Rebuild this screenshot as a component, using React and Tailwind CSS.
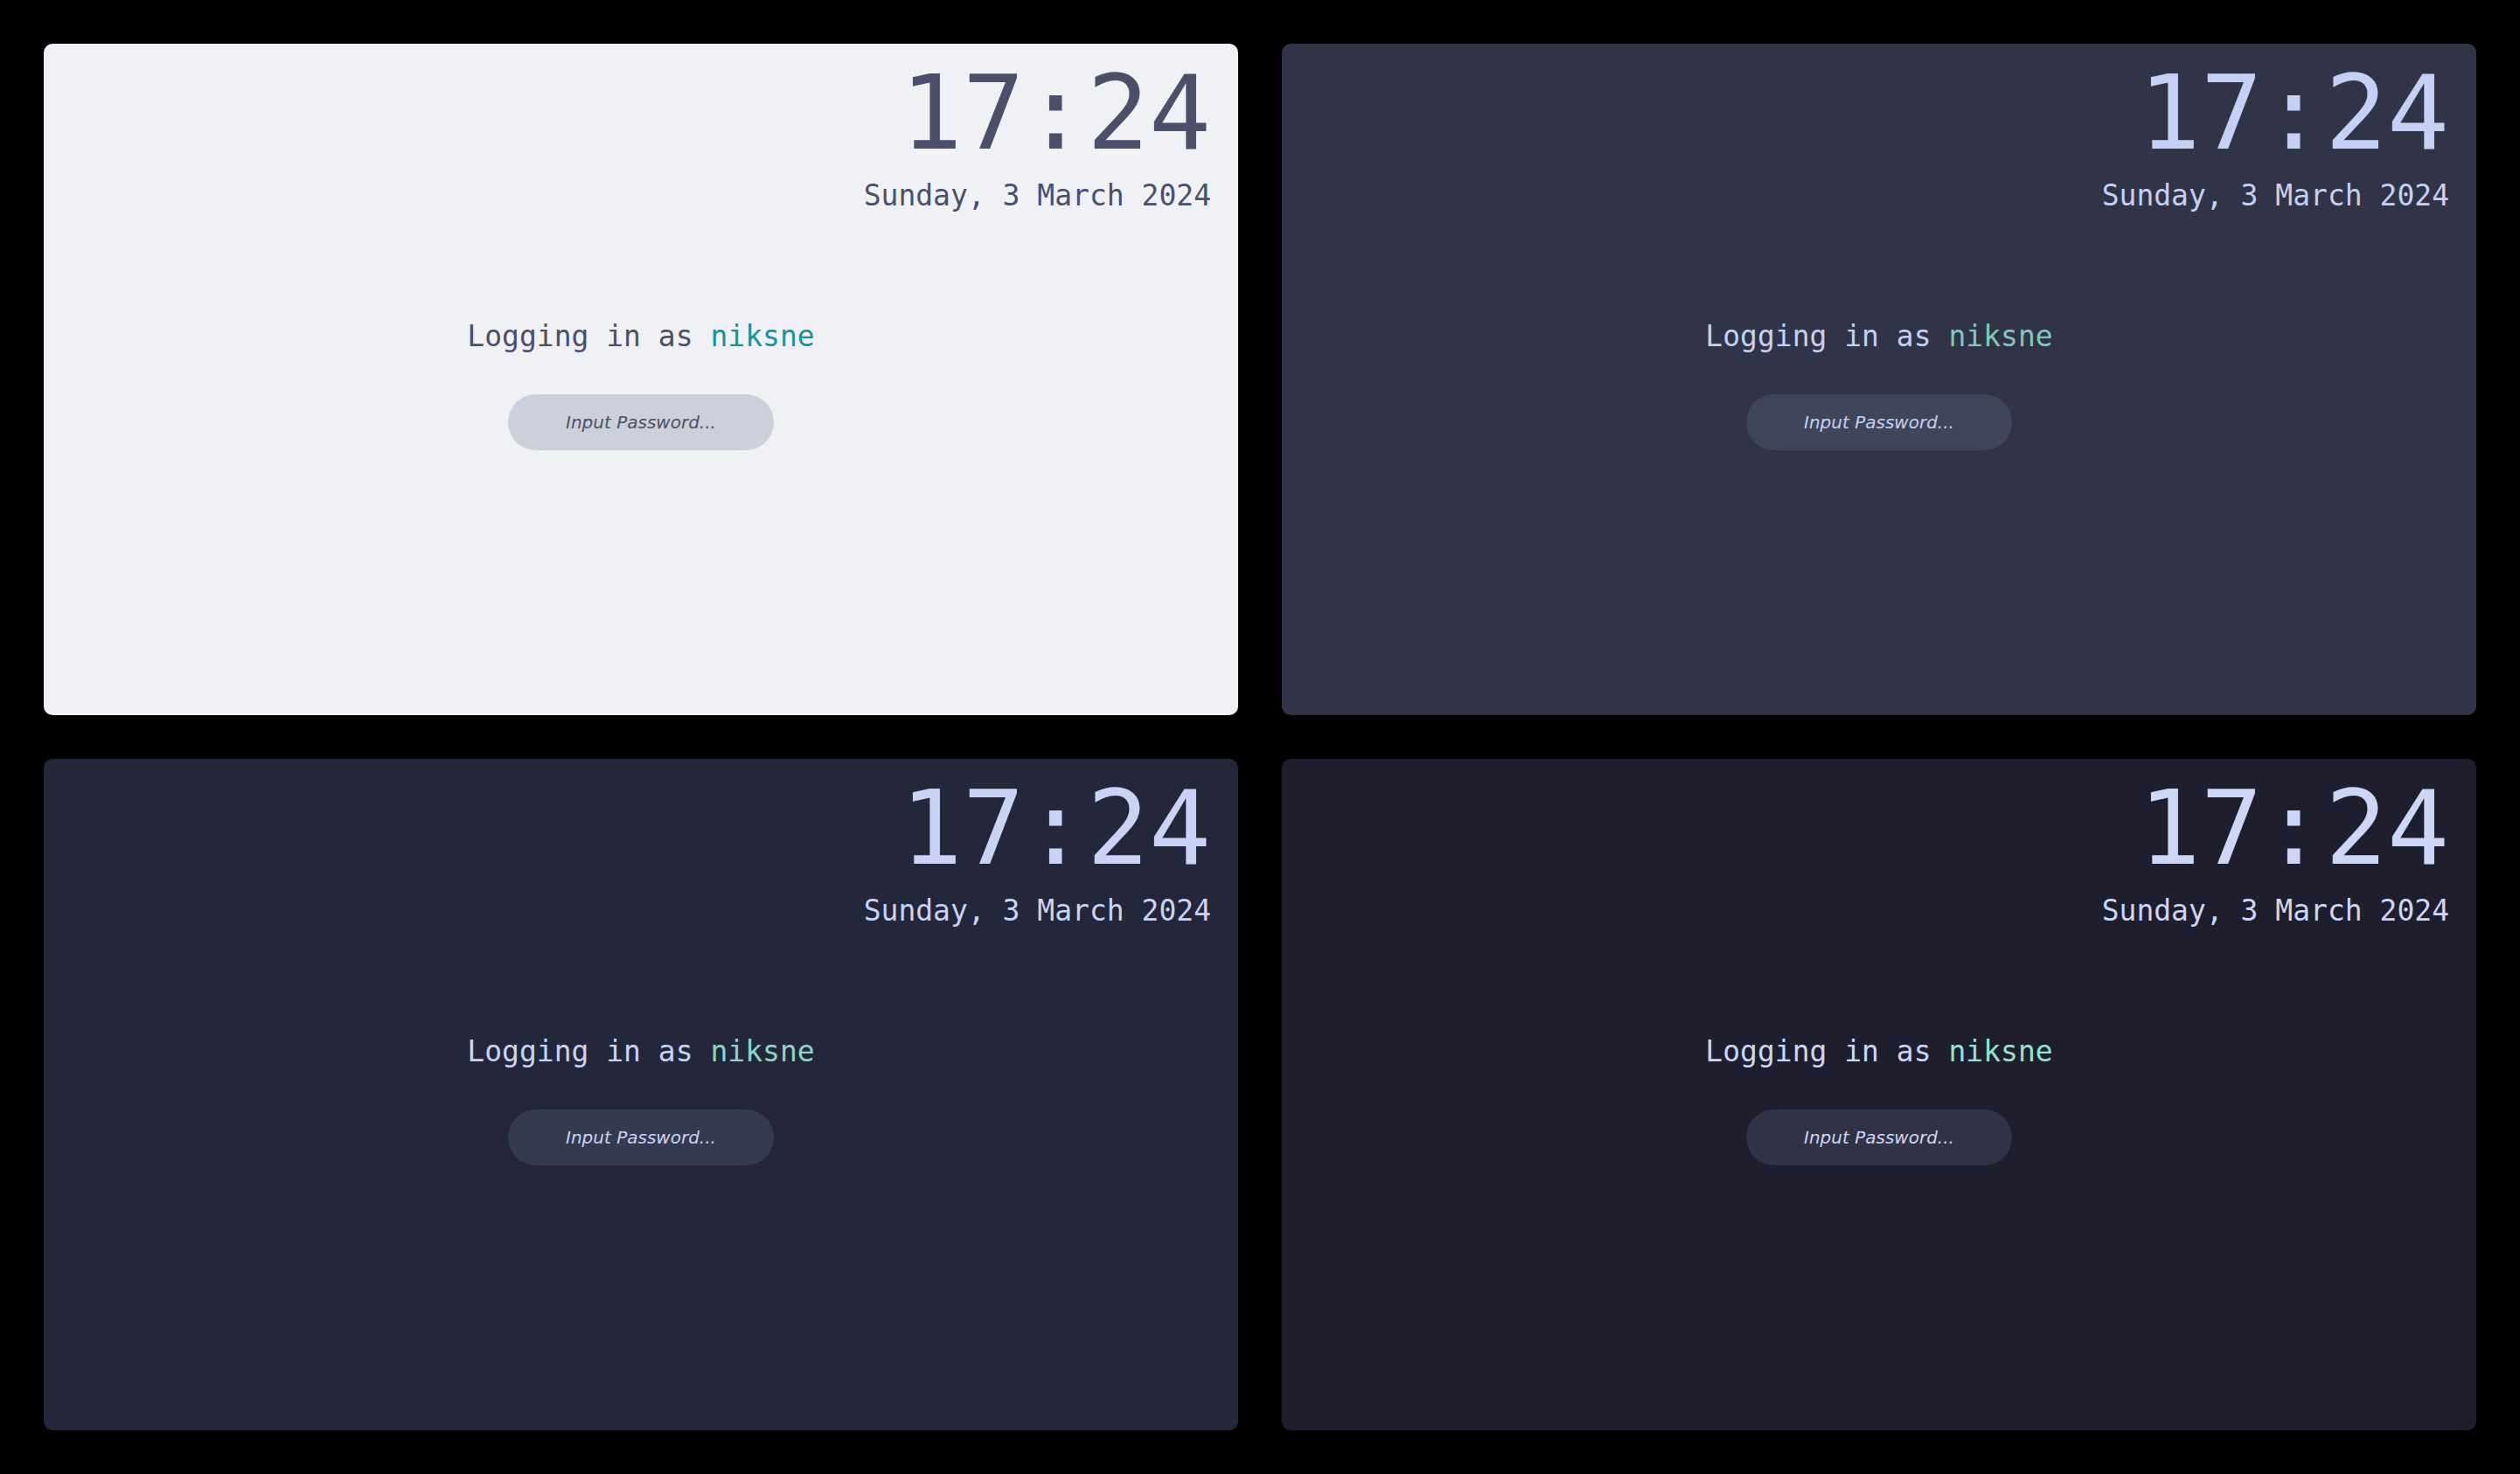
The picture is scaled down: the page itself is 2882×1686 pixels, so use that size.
import React from 'react';

const themes = [
  { name: 'latte', bg: 'bg-[#eff1f5]', text: 'text-[#4c4f69]', accent: 'text-[#179299]', field: 'bg-[#ccd0da]' },
  { name: 'frappe', bg: 'bg-[#303446]', text: 'text-[#c6d0f5]', accent: 'text-[#81c8be]', field: 'bg-[#414559]' },
  { name: 'macchiato', bg: 'bg-[#24273a]', text: 'text-[#cad3f5]', accent: 'text-[#8bd5ca]', field: 'bg-[#363a4f]' },
  { name: 'mocha', bg: 'bg-[#1e1e2e]', text: 'text-[#cdd6f4]', accent: 'text-[#94e2d5]', field: 'bg-[#313244]' },
];

function LockScreen({ theme }) {
  return (
    <div className={`flex h-[768px] w-[1366px] flex-col rounded-[10px] ${theme.bg} ${theme.text} font-['DejaVu_Sans_Mono',monospace]`}>
      {/* clock + date, top right */}
      <div className="flex flex-col items-end pr-[31px] pt-[20px]">
        <div className="text-[118px] leading-none">17:24</div>
        <div className="mt-[19px] text-[33px] leading-none">Sunday, 3 March 2024</div>
      </div>

      {/* login prompt, centred */}
      <div className="mt-[128px] flex flex-col items-center">
        <div className="text-[33px] leading-none">
          Logging in as <span className={theme.accent}>niksne</span>
        </div>
        <div className={`mt-[50px] flex h-[64px] w-[304px] items-center justify-center rounded-full ${theme.field}`}>
          <span className="font-['DejaVu_Sans',sans-serif] text-[20px] italic leading-none">Input Password...</span>
        </div>
      </div>
    </div>
  );
}

export default function App() {
  return (
    <div className="grid h-[1686px] w-[2882px] grid-cols-2 gap-[50px] bg-black p-[50px]">
      {themes.map((t) => (
        <LockScreen key={t.name} theme={t} />
      ))}
    </div>
  );
}
